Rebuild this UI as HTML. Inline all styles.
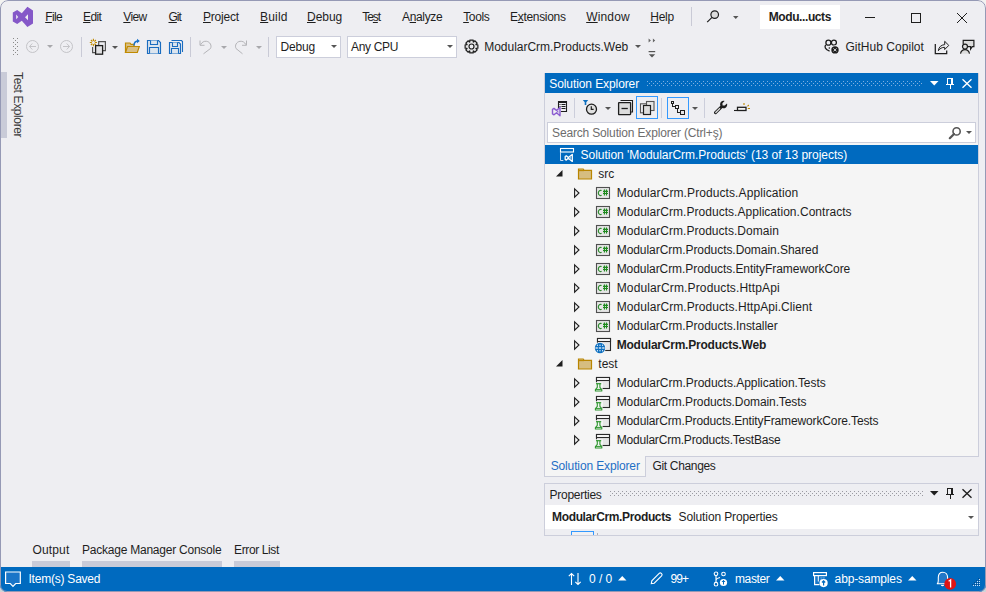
<!DOCTYPE html>
<html><head><meta charset="utf-8">
<style>
html,body{margin:0;padding:0;width:986px;height:592px;overflow:hidden;background:#f3f3f1;}
*{box-sizing:border-box;}
#win{position:absolute;left:0;top:0;width:986px;height:592px;background:#eeeef2;border-radius:8px 8px 7px 7px;overflow:hidden;}
.corner{position:absolute;width:10px;height:10px;background:#d4d4d6;}
#frame{position:absolute;z-index:5;left:0;top:0;width:986px;height:592px;border:1px solid #9599b5;border-radius:8px 8px 7px 7px;pointer-events:none;}
.a{position:absolute;}
.t{position:absolute;z-index:2;font-family:"Liberation Sans",sans-serif;font-size:12px;line-height:14px;white-space:nowrap;color:#1e1e1e;}
.u{text-decoration:underline;text-underline-offset:1px;}
svg{position:absolute;overflow:visible;}
</style></head><body>
<div class="corner" style="left:0;top:582px"></div><div class="corner" style="left:976px;top:582px"></div>
<div id="win">
<!-- ===== title/menu bar ===== -->
<svg style="left:12px;top:6px" width="22" height="22" viewBox="0 0 22 22">
  <path d="M0.8 6.6 L5.2 4 L9.8 7.3 L15.4 0.8 L21 4.5 L21 17.5 L15.4 21 L9.8 14.7 L5.2 18 L0.8 15.4 Z" fill="#8558c8"/>
  <path d="M4.2 8.5 L6.2 10.9 L4.2 13.3 Z" fill="#eeeef2"/>
  <path d="M16 8.2 L16 14.3 L13 11.2 Z" fill="#eeeef2"/>
</svg>
<div class="a" style="left:691px;top:7px;width:1px;height:19px;background:#c9cad6"></div>
<!-- search -->
<svg style="left:705px;top:9px" width="16" height="14" viewBox="0 0 16 14">
  <circle cx="9.7" cy="5.6" r="3.8" fill="#dcdcdc" stroke="#1e1e1e" stroke-width="1.2"/>
  <path d="M7 8.4 L2.2 13.2" stroke="#1e1e1e" stroke-width="1.2"/>
</svg>
<svg style="left:733px;top:16px" width="6" height="4" viewBox="0 0 6 4"><path d="M0 0H5.5L2.75 3Z" fill="#555"/></svg>
<div class="a" style="left:760px;top:5px;width:80px;height:24px;background:#fff"></div>
<!-- window buttons -->
<div class="a" style="left:865px;top:17px;width:10px;height:1px;background:#1e1e1e"></div>
<div class="a" style="left:911px;top:13px;width:10px;height:10px;border:1px solid #1e1e1e"></div>
<svg style="left:957px;top:13px" width="10" height="10" viewBox="0 0 10 10"><path d="M0 0L10 10M10 0L0 10" stroke="#1e1e1e" stroke-width="1"/></svg>

<div class="t" style="left:45.20px;top:10px;letter-spacing:-0.654px"><span class="u">F</span>ile</div>
<div class="t" style="left:83.10px;top:10px;letter-spacing:-0.681px"><span class="u">E</span>dit</div>
<div class="t" style="left:123.30px;top:10px;letter-spacing:-0.609px"><span class="u">V</span>iew</div>
<div class="t" style="left:168.50px;top:10px;letter-spacing:-1.000px"><span class="u">G</span>it</div>
<div class="t" style="left:203.00px;top:10px;letter-spacing:-0.202px"><span class="u">P</span>roject</div>
<div class="t" style="left:260.10px;top:10px;letter-spacing:0.148px"><span class="u">B</span>uild</div>
<div class="t" style="left:307.00px;top:10px;letter-spacing:-0.047px"><span class="u">D</span>ebug</div>
<div class="t" style="left:362.30px;top:10px;letter-spacing:-1.058px">Te<span class="u">s</span>t</div>
<div class="t" style="left:402.00px;top:10px;letter-spacing:-0.336px">A<span class="u">n</span>alyze</div>
<div class="t" style="left:463.20px;top:10px;letter-spacing:-0.353px"><span class="u">T</span>ools</div>
<div class="t" style="left:510.10px;top:10px;letter-spacing:-0.322px">E<span class="u">x</span>tensions</div>
<div class="t" style="left:586.20px;top:10px;letter-spacing:0.157px"><span class="u">W</span>indow</div>
<div class="t" style="left:650.30px;top:10px;letter-spacing:-0.302px"><span class="u">H</span>elp</div>
<div class="t" style="left:768.70px;top:10px;letter-spacing:-0.399px;font-weight:bold">Modu...ucts</div>
<div class="t" style="left:280.50px;top:40px;letter-spacing:-0.147px">Debug</div>
<div class="t" style="left:351.10px;top:40px;letter-spacing:-0.330px">Any CPU</div>
<div class="t" style="left:484.20px;top:40px;letter-spacing:-0.019px">ModularCrm.Products.Web</div>
<div class="t" style="left:845.40px;top:40px;letter-spacing:0.038px">GitHub Copilot</div>
<!-- ===== toolbar ===== -->
<!-- gripper -->
<svg style="left:13px;top:38px" width="6" height="18" viewBox="0 0 6 18" shape-rendering="crispEdges">
 <g fill="#8a8a8a"><rect x="0" y="0" width="1" height="1"/><rect x="4" y="0" width="1" height="1"/><rect x="2" y="2" width="1" height="1"/><rect x="0" y="4" width="1" height="1"/><rect x="4" y="4" width="1" height="1"/><rect x="2" y="6" width="1" height="1"/><rect x="0" y="8" width="1" height="1"/><rect x="4" y="8" width="1" height="1"/><rect x="2" y="10" width="1" height="1"/><rect x="0" y="12" width="1" height="1"/><rect x="4" y="12" width="1" height="1"/><rect x="2" y="14" width="1" height="1"/><rect x="0" y="16" width="1" height="1"/><rect x="4" y="16" width="1" height="1"/></g>
</svg>
<!-- back / forward -->
<svg style="left:26px;top:40px" width="14" height="14" viewBox="0 0 14 14">
 <circle cx="6.5" cy="6.5" r="6" fill="none" stroke="#c4c4c8" stroke-width="1"/>
 <path d="M3.5 6.5H10M6.3 3.5L3.5 6.5L6.3 9.5" fill="none" stroke="#c4c4c8" stroke-width="1"/>
</svg>
<svg style="left:47px;top:45px" width="7" height="4" viewBox="0 0 7 4"><path d="M0 0H6L3 3Z" fill="#a8a8ac"/></svg>
<svg style="left:60px;top:40px" width="14" height="14" viewBox="0 0 14 14">
 <circle cx="6.5" cy="6.5" r="6" fill="none" stroke="#c4c4c8" stroke-width="1"/>
 <path d="M3 6.5H9.5M6.7 3.5L9.5 6.5L6.7 9.5" fill="none" stroke="#c4c4c8" stroke-width="1"/>
</svg>
<div class="a" style="left:81px;top:37px;width:1px;height:20px;background:#c9cad6"></div>
<!-- new project -->
<svg style="left:89px;top:38px" width="18" height="18" viewBox="0 0 18 18">
 <g stroke="#c08a00" stroke-width="1.1"><path d="M4.4 0.8V8.2M0.8 4.5H8M1.9 2L6.9 7M6.9 2L1.9 7"/></g>
 <circle cx="4.4" cy="4.5" r="1.5" fill="#eeeef2"/>
 <path d="M9.7 7.2V3.6H16.4V12.6H14" fill="none" stroke="#555" stroke-width="1.2"/>
 <path d="M3.6 9V14.6H6.2" fill="none" stroke="#555" stroke-width="1.2"/>
 <rect x="6.6" y="7.6" width="7" height="8.6" fill="#e2e2e4" stroke="#1e1e1e" stroke-width="1.3"/>
</svg>
<svg style="left:112px;top:46px" width="7" height="4" viewBox="0 0 7 4"><path d="M0 0H6L3 3Z" fill="#555"/></svg>
<!-- open -->
<svg style="left:124px;top:38px" width="17" height="16" viewBox="0 0 17 16">
 <path d="M1.5 14.5V5H6L7 6.3H10V14.5Z" fill="#d9bf85" stroke="#c08a00" stroke-width="1.2"/>
 <path d="M1.5 14.5L3.5 8.5H15.3L13.3 14.5Z" fill="#d9bf85" stroke="#c08a00" stroke-width="1.2"/>
 <path d="M10 7.5C10 4.5 11.5 3 14.5 3" fill="none" stroke="#1a73c9" stroke-width="1.5"/>
 <path d="M13 0.8L15.8 3L13 5.2Z" fill="#1a73c9"/>
</svg>
<!-- save -->
<svg style="left:146px;top:39px" width="16" height="16" viewBox="0 0 16 16">
 <path d="M1.5 1.5H12.5L14.5 3.5V14.5H1.5Z" fill="#dde5ee" stroke="#1a6cc0" stroke-width="1.15"/>
 <path d="M4.5 1.5V5.5H11.5V1.5" fill="#dde5ee" stroke="#1a6cc0" stroke-width="1.15"/>
 <path d="M3.5 14.5V8.5H12.5V14.5" fill="#dde5ee" stroke="#1a6cc0" stroke-width="1.15"/>
</svg>
<svg style="left:168px;top:39px" width="16" height="16" viewBox="0 0 16 16">
 <path d="M3.5 1.5H13.5L14.5 2.5V13" fill="none" stroke="#1a6cc0" stroke-width="1.1"/>
 <path d="M1.5 3.5H11L12.5 5V14.5H1.5Z" fill="#dde5ee" stroke="#1a6cc0" stroke-width="1.15"/>
 <path d="M4.5 3.5V7.5H9.5V3.5" fill="#dde5ee" stroke="#1a6cc0" stroke-width="1.1"/>
 <path d="M3.5 14.5V9.5H10.5V14.5" fill="#dde5ee" stroke="#1a6cc0" stroke-width="1.1"/>
</svg>
<div class="a" style="left:190px;top:37px;width:1px;height:20px;background:#c9cad6"></div>
<!-- undo redo -->
<svg style="left:199px;top:39px" width="14" height="16" viewBox="0 0 14 16">
 <path d="M1 1.5V6.3H5.5" fill="none" stroke="#b4b4b8" stroke-width="1"/>
 <path d="M1.5 5.8C3 3 5 2 7.5 2.3C11 2.8 13 6.5 11.5 9.5L4.5 14.8" fill="none" stroke="#b4b4b8" stroke-width="1"/>
</svg>
<svg style="left:221px;top:46px" width="7" height="4" viewBox="0 0 7 4"><path d="M0 0H6L3 3Z" fill="#a8a8ac"/></svg>
<svg style="left:234px;top:39px" width="14" height="16" viewBox="0 0 14 16">
 <path d="M12.5 1.5V6.3H8" fill="none" stroke="#b4b4b8" stroke-width="1"/>
 <path d="M12 5.8C10.5 3 8.5 2 6 2.3C2.5 2.8 0.5 6.5 2 9.5L8.5 14.8" fill="none" stroke="#b4b4b8" stroke-width="1"/>
</svg>
<svg style="left:256px;top:46px" width="7" height="4" viewBox="0 0 7 4"><path d="M0 0H6L3 3Z" fill="#a8a8ac"/></svg>
<div class="a" style="left:268px;top:37px;width:1px;height:20px;background:#c9cad6"></div>
<!-- combos -->
<div class="a" style="left:276px;top:36px;width:65px;height:22px;background:#fff;border:1px solid #cccedb"></div>
<svg style="left:331px;top:45px" width="7" height="4" viewBox="0 0 7 4"><path d="M0 0H6L3 3Z" fill="#555"/></svg>
<div class="a" style="left:347px;top:36px;width:110px;height:22px;background:#fff;border:1px solid #cccedb"></div>
<svg style="left:447px;top:45px" width="7" height="4" viewBox="0 0 7 4"><path d="M0 0H6L3 3Z" fill="#555"/></svg>
<!-- gear -->
<svg style="left:464px;top:39px" width="15" height="15" viewBox="0 0 15 15">
 <path d="M5.62 2.97 L5.77 2.91 L5.80 1.12 L9.20 1.12 L9.23 2.91 L9.38 2.97 L9.52 3.04 L10.81 1.79 L13.21 4.19 L11.96 5.48 L12.03 5.62 L12.09 5.77 L13.88 5.80 L13.88 9.20 L12.09 9.23 L12.03 9.38 L11.96 9.52 L13.21 10.81 L10.81 13.21 L9.52 11.96 L9.38 12.03 L9.23 12.09 L9.20 13.88 L5.80 13.88 L5.77 12.09 L5.62 12.03 L5.48 11.96 L4.19 13.21 L1.79 10.81 L3.04 9.52 L2.97 9.38 L2.91 9.23 L1.12 9.20 L1.12 5.80 L2.91 5.77 L2.97 5.62 L3.04 5.48 L1.79 4.19 L4.19 1.79 L5.48 3.04Z" fill="#e4e4e6" stroke="#1e1e1e" stroke-width="1.2" stroke-linejoin="round"/>
 <circle cx="7.5" cy="7.5" r="2.5" fill="#eeeef2" stroke="#1e1e1e" stroke-width="1.2"/>
</svg>
<svg style="left:635px;top:45px" width="7" height="4" viewBox="0 0 7 4"><path d="M0 0H6L3 3Z" fill="#555"/></svg>
<!-- overflow -->
<svg style="left:647px;top:38px" width="10" height="20" viewBox="0 0 10 20">
 <path d="M1.6 0.6L3.9 2.6L1.6 4.6ZM5.9 0.6L8.2 2.6L5.9 4.6Z" fill="#666"/>
 <rect x="1.6" y="13" width="6.6" height="1.2" fill="#555"/>
 <path d="M1.8 16.3H8.2L5 19.6Z" fill="#555"/>
</svg>
<!-- right side -->
<svg style="left:820px;top:36px" width="22" height="20" viewBox="0 0 22 20">
 <circle cx="8.4" cy="6.7" r="2.5" fill="#eeeef2" stroke="#1e1e1e" stroke-width="1.3"/>
 <circle cx="13.9" cy="6.6" r="2.5" fill="#eeeef2" stroke="#1e1e1e" stroke-width="1.3"/>
 <path d="M5.6 8.8C4.6 10.5 4.6 13.6 9.6 15.2" fill="none" stroke="#1e1e1e" stroke-width="1.3"/>
 <path d="M9.3 11.2V12.8" stroke="#1e1e1e" stroke-width="1.1"/>
 <circle cx="15" cy="13.9" r="4.4" fill="#eeeef2"/>
 <circle cx="15" cy="13.9" r="3.7" fill="#1e1e1e"/>
 <path d="M13.5 12.4L16.5 15.4M16.5 12.4L13.5 15.4" stroke="#eeeef2" stroke-width="0.9"/>
</svg>
<div class="t" style="left:845px;top:40px;display:none"></div>
<svg style="left:934px;top:40px" width="16" height="15" viewBox="0 0 16 15">
 <path d="M1.3 4.1V13.5H12.7V10.5" fill="none" stroke="#1e1e1e" stroke-width="1.25"/>
 <path d="M4.4 10.7C4.8 7 7 5 10.7 4.6V1.3L14.8 5.4L10.7 9.5V7.3C8 7.3 5.8 8.5 4.4 10.7Z" fill="#eeeef2" stroke="#1e1e1e" stroke-width="1" stroke-linejoin="round"/>
</svg>
<svg style="left:960px;top:39px" width="16" height="16" viewBox="0 0 16 16">
 <path d="M3.2 5V1.3H13.9V7.6H12.3L10.6 10V7.6H8" fill="#dcdcdc" stroke="#1e1e1e" stroke-width="1.2"/>
 <path d="M0.5 14.7C1 12 2.8 10.6 5 10.6C7.2 10.6 9 12 9.5 14.7Z" fill="#dcdcdc"/>
 <path d="M0.5 14.7C1 12 2.8 10.6 5 10.6C7.2 10.6 9 12 9.5 14.7" fill="none" stroke="#1e1e1e" stroke-width="1.2"/>
 <circle cx="5" cy="7.6" r="2.5" fill="#dcdcdc" stroke="#1e1e1e" stroke-width="1.2"/>
</svg>
<!-- ===== Solution Explorer ===== -->
<div class="a" style="left:544px;top:73px;width:435px;height:384px;border:1px solid #cccedb;border-top:none;background:#eeeef2"></div>
<div class="a" style="left:545px;top:73px;width:433px;height:20px;background:#006abf"></div>
<div class="t" style="left:549.30px;top:77px;letter-spacing:-0.093px;color:#fff">Solution Explorer</div>
<svg style="left:647px;top:81px" width="276" height="5" shape-rendering="crispEdges"><g fill="#7fb0e0"><rect x="0" y="0" width="1" height="1"/><rect x="0" y="4" width="1" height="1"/><rect x="2" y="2" width="1" height="1"/><rect x="4" y="0" width="1" height="1"/><rect x="4" y="4" width="1" height="1"/><rect x="6" y="2" width="1" height="1"/><rect x="8" y="0" width="1" height="1"/><rect x="8" y="4" width="1" height="1"/><rect x="10" y="2" width="1" height="1"/><rect x="12" y="0" width="1" height="1"/><rect x="12" y="4" width="1" height="1"/><rect x="14" y="2" width="1" height="1"/><rect x="16" y="0" width="1" height="1"/><rect x="16" y="4" width="1" height="1"/><rect x="18" y="2" width="1" height="1"/><rect x="20" y="0" width="1" height="1"/><rect x="20" y="4" width="1" height="1"/><rect x="22" y="2" width="1" height="1"/><rect x="24" y="0" width="1" height="1"/><rect x="24" y="4" width="1" height="1"/><rect x="26" y="2" width="1" height="1"/><rect x="28" y="0" width="1" height="1"/><rect x="28" y="4" width="1" height="1"/><rect x="30" y="2" width="1" height="1"/><rect x="32" y="0" width="1" height="1"/><rect x="32" y="4" width="1" height="1"/><rect x="34" y="2" width="1" height="1"/><rect x="36" y="0" width="1" height="1"/><rect x="36" y="4" width="1" height="1"/><rect x="38" y="2" width="1" height="1"/><rect x="40" y="0" width="1" height="1"/><rect x="40" y="4" width="1" height="1"/><rect x="42" y="2" width="1" height="1"/><rect x="44" y="0" width="1" height="1"/><rect x="44" y="4" width="1" height="1"/><rect x="46" y="2" width="1" height="1"/><rect x="48" y="0" width="1" height="1"/><rect x="48" y="4" width="1" height="1"/><rect x="50" y="2" width="1" height="1"/><rect x="52" y="0" width="1" height="1"/><rect x="52" y="4" width="1" height="1"/><rect x="54" y="2" width="1" height="1"/><rect x="56" y="0" width="1" height="1"/><rect x="56" y="4" width="1" height="1"/><rect x="58" y="2" width="1" height="1"/><rect x="60" y="0" width="1" height="1"/><rect x="60" y="4" width="1" height="1"/><rect x="62" y="2" width="1" height="1"/><rect x="64" y="0" width="1" height="1"/><rect x="64" y="4" width="1" height="1"/><rect x="66" y="2" width="1" height="1"/><rect x="68" y="0" width="1" height="1"/><rect x="68" y="4" width="1" height="1"/><rect x="70" y="2" width="1" height="1"/><rect x="72" y="0" width="1" height="1"/><rect x="72" y="4" width="1" height="1"/><rect x="74" y="2" width="1" height="1"/><rect x="76" y="0" width="1" height="1"/><rect x="76" y="4" width="1" height="1"/><rect x="78" y="2" width="1" height="1"/><rect x="80" y="0" width="1" height="1"/><rect x="80" y="4" width="1" height="1"/><rect x="82" y="2" width="1" height="1"/><rect x="84" y="0" width="1" height="1"/><rect x="84" y="4" width="1" height="1"/><rect x="86" y="2" width="1" height="1"/><rect x="88" y="0" width="1" height="1"/><rect x="88" y="4" width="1" height="1"/><rect x="90" y="2" width="1" height="1"/><rect x="92" y="0" width="1" height="1"/><rect x="92" y="4" width="1" height="1"/><rect x="94" y="2" width="1" height="1"/><rect x="96" y="0" width="1" height="1"/><rect x="96" y="4" width="1" height="1"/><rect x="98" y="2" width="1" height="1"/><rect x="100" y="0" width="1" height="1"/><rect x="100" y="4" width="1" height="1"/><rect x="102" y="2" width="1" height="1"/><rect x="104" y="0" width="1" height="1"/><rect x="104" y="4" width="1" height="1"/><rect x="106" y="2" width="1" height="1"/><rect x="108" y="0" width="1" height="1"/><rect x="108" y="4" width="1" height="1"/><rect x="110" y="2" width="1" height="1"/><rect x="112" y="0" width="1" height="1"/><rect x="112" y="4" width="1" height="1"/><rect x="114" y="2" width="1" height="1"/><rect x="116" y="0" width="1" height="1"/><rect x="116" y="4" width="1" height="1"/><rect x="118" y="2" width="1" height="1"/><rect x="120" y="0" width="1" height="1"/><rect x="120" y="4" width="1" height="1"/><rect x="122" y="2" width="1" height="1"/><rect x="124" y="0" width="1" height="1"/><rect x="124" y="4" width="1" height="1"/><rect x="126" y="2" width="1" height="1"/><rect x="128" y="0" width="1" height="1"/><rect x="128" y="4" width="1" height="1"/><rect x="130" y="2" width="1" height="1"/><rect x="132" y="0" width="1" height="1"/><rect x="132" y="4" width="1" height="1"/><rect x="134" y="2" width="1" height="1"/><rect x="136" y="0" width="1" height="1"/><rect x="136" y="4" width="1" height="1"/><rect x="138" y="2" width="1" height="1"/><rect x="140" y="0" width="1" height="1"/><rect x="140" y="4" width="1" height="1"/><rect x="142" y="2" width="1" height="1"/><rect x="144" y="0" width="1" height="1"/><rect x="144" y="4" width="1" height="1"/><rect x="146" y="2" width="1" height="1"/><rect x="148" y="0" width="1" height="1"/><rect x="148" y="4" width="1" height="1"/><rect x="150" y="2" width="1" height="1"/><rect x="152" y="0" width="1" height="1"/><rect x="152" y="4" width="1" height="1"/><rect x="154" y="2" width="1" height="1"/><rect x="156" y="0" width="1" height="1"/><rect x="156" y="4" width="1" height="1"/><rect x="158" y="2" width="1" height="1"/><rect x="160" y="0" width="1" height="1"/><rect x="160" y="4" width="1" height="1"/><rect x="162" y="2" width="1" height="1"/><rect x="164" y="0" width="1" height="1"/><rect x="164" y="4" width="1" height="1"/><rect x="166" y="2" width="1" height="1"/><rect x="168" y="0" width="1" height="1"/><rect x="168" y="4" width="1" height="1"/><rect x="170" y="2" width="1" height="1"/><rect x="172" y="0" width="1" height="1"/><rect x="172" y="4" width="1" height="1"/><rect x="174" y="2" width="1" height="1"/><rect x="176" y="0" width="1" height="1"/><rect x="176" y="4" width="1" height="1"/><rect x="178" y="2" width="1" height="1"/><rect x="180" y="0" width="1" height="1"/><rect x="180" y="4" width="1" height="1"/><rect x="182" y="2" width="1" height="1"/><rect x="184" y="0" width="1" height="1"/><rect x="184" y="4" width="1" height="1"/><rect x="186" y="2" width="1" height="1"/><rect x="188" y="0" width="1" height="1"/><rect x="188" y="4" width="1" height="1"/><rect x="190" y="2" width="1" height="1"/><rect x="192" y="0" width="1" height="1"/><rect x="192" y="4" width="1" height="1"/><rect x="194" y="2" width="1" height="1"/><rect x="196" y="0" width="1" height="1"/><rect x="196" y="4" width="1" height="1"/><rect x="198" y="2" width="1" height="1"/><rect x="200" y="0" width="1" height="1"/><rect x="200" y="4" width="1" height="1"/><rect x="202" y="2" width="1" height="1"/><rect x="204" y="0" width="1" height="1"/><rect x="204" y="4" width="1" height="1"/><rect x="206" y="2" width="1" height="1"/><rect x="208" y="0" width="1" height="1"/><rect x="208" y="4" width="1" height="1"/><rect x="210" y="2" width="1" height="1"/><rect x="212" y="0" width="1" height="1"/><rect x="212" y="4" width="1" height="1"/><rect x="214" y="2" width="1" height="1"/><rect x="216" y="0" width="1" height="1"/><rect x="216" y="4" width="1" height="1"/><rect x="218" y="2" width="1" height="1"/><rect x="220" y="0" width="1" height="1"/><rect x="220" y="4" width="1" height="1"/><rect x="222" y="2" width="1" height="1"/><rect x="224" y="0" width="1" height="1"/><rect x="224" y="4" width="1" height="1"/><rect x="226" y="2" width="1" height="1"/><rect x="228" y="0" width="1" height="1"/><rect x="228" y="4" width="1" height="1"/><rect x="230" y="2" width="1" height="1"/><rect x="232" y="0" width="1" height="1"/><rect x="232" y="4" width="1" height="1"/><rect x="234" y="2" width="1" height="1"/><rect x="236" y="0" width="1" height="1"/><rect x="236" y="4" width="1" height="1"/><rect x="238" y="2" width="1" height="1"/><rect x="240" y="0" width="1" height="1"/><rect x="240" y="4" width="1" height="1"/><rect x="242" y="2" width="1" height="1"/><rect x="244" y="0" width="1" height="1"/><rect x="244" y="4" width="1" height="1"/><rect x="246" y="2" width="1" height="1"/><rect x="248" y="0" width="1" height="1"/><rect x="248" y="4" width="1" height="1"/><rect x="250" y="2" width="1" height="1"/><rect x="252" y="0" width="1" height="1"/><rect x="252" y="4" width="1" height="1"/><rect x="254" y="2" width="1" height="1"/><rect x="256" y="0" width="1" height="1"/><rect x="256" y="4" width="1" height="1"/><rect x="258" y="2" width="1" height="1"/><rect x="260" y="0" width="1" height="1"/><rect x="260" y="4" width="1" height="1"/><rect x="262" y="2" width="1" height="1"/><rect x="264" y="0" width="1" height="1"/><rect x="264" y="4" width="1" height="1"/><rect x="266" y="2" width="1" height="1"/><rect x="268" y="0" width="1" height="1"/><rect x="268" y="4" width="1" height="1"/><rect x="270" y="2" width="1" height="1"/><rect x="272" y="0" width="1" height="1"/><rect x="272" y="4" width="1" height="1"/><rect x="274" y="2" width="1" height="1"/></g></svg>
<svg style="left:930px;top:81px" width="9" height="5" viewBox="0 0 9 5"><path d="M0 0H8.5L4.25 4.5Z" fill="#fff"/></svg>
<svg style="left:946px;top:78px" width="9" height="12" viewBox="0 0 9 12" shape-rendering="crispEdges"><path d="M1 0H7V6H8V7H0V6H1Z" fill="#fff"/><path d="M2 1H5V6H2Z" fill="#006abf"/><rect x="4" y="7" width="1" height="4" fill="#fff"/></svg>
<svg style="left:962px;top:79px" width="10" height="9" viewBox="0 0 10 9"><path d="M0.5 0.3L9.5 8.7M9.5 0.3L0.5 8.7" stroke="#fff" stroke-width="1.4"/></svg>
<svg style="left:551px;top:100px" width="18" height="17" viewBox="0 0 18 17">
 <path d="M7.5 9V1.5H15.5V11.5H10" fill="#eeeef2" stroke="#1e1e1e" stroke-width="1.1"/>
 <rect x="7" y="1" width="9" height="2" fill="#1e1e1e"/>
 <path d="M8.5 4.5H9.5M8.5 6.5H9.5M10.5 4.5H14.5M10.5 6.5H14.5M10.5 8.5H14.5" stroke="#1e1e1e" stroke-width="1"/>
 <g transform="translate(0,1)"><path d="M1.5 8.3L3 7.4L5.5 9.5L9 6.5V14.8L5.5 11.7L3 13.8L1.5 12.9Z" fill="#eeeef2" stroke="#8a5bd0" stroke-width="1.4" stroke-linejoin="round"/>
 <path d="M7.3 9.3V12L5.8 10.6Z" fill="#8a5bd0"/></g>
</svg>
<div class="a" style="left:574px;top:98px;width:1px;height:20px;background:#cccedb"></div>
<svg style="left:582px;top:99px" width="17" height="17" viewBox="0 0 17 17">
 <path d="M0.8 1H6.2L4.3 3.3V6H2.7V3.3Z" fill="#0e70c0"/>
 <circle cx="9.5" cy="10.2" r="5" fill="#e0e0e0" stroke="#1e1e1e" stroke-width="1.3"/>
 <path d="M9.3 7.2V10.3H11.6" fill="none" stroke="#1e1e1e" stroke-width="1.2"/>
</svg>
<svg style="left:605px;top:107px" width="7" height="4" viewBox="0 0 7 4"><path d="M0 0H6L3 3Z" fill="#555"/></svg>
<svg style="left:617px;top:99px" width="17" height="17" viewBox="0 0 17 17">
 <path d="M3.5 1.5H15.5V13H14" fill="none" stroke="#1e1e1e" stroke-width="1.1"/>
 <rect x="1.6" y="3.6" width="12" height="12" rx="0.5" fill="#dcdcdc" stroke="#1e1e1e" stroke-width="1.3"/>
 <path d="M4.5 9.5H10.8" stroke="#1e1e1e" stroke-width="1.3"/>
</svg>
<div class="a" style="left:636px;top:96px;width:22px;height:23px;border:1px solid #3399ff"></div>
<svg style="left:639px;top:100px" width="17" height="16" viewBox="0 0 17 16">
 <rect x="7.5" y="1.5" width="7.5" height="9" fill="#e6e6e6" stroke="#555" stroke-width="1.1"/>
 <rect x="1.5" y="3.8" width="6" height="9" fill="#eeeef2" stroke="#555" stroke-width="1.1"/>
 <rect x="4.5" y="5.5" width="7" height="9" fill="#dcdcdc" stroke="#1e1e1e" stroke-width="1.2"/>
</svg>
<div class="a" style="left:661px;top:98px;width:1px;height:20px;background:#cccedb"></div>
<div class="a" style="left:667px;top:97px;width:22px;height:22px;border:1px solid #3399ff"></div>
<svg style="left:670px;top:100px" width="16" height="16" viewBox="0 0 16 16" shape-rendering="crispEdges">
 <rect x="1.5" y="1.5" width="2" height="2" fill="none" stroke="#1e1e1e" stroke-width="1"/>
 <rect x="5.5" y="5.5" width="3" height="3" fill="none" stroke="#1e1e1e" stroke-width="1"/>
 <rect x="10.5" y="10.5" width="4" height="4" fill="#e6e6e6" stroke="#1e1e1e" stroke-width="1"/>
 <path d="M2.5 3.5V6.5H5.5M7 8.5V12.5H10.5" fill="none" stroke="#1e1e1e" stroke-width="1"/>
</svg>
<svg style="left:692px;top:107px" width="7" height="4" viewBox="0 0 7 4"><path d="M0 0H6L3 3Z" fill="#555"/></svg>
<div class="a" style="left:704px;top:98px;width:1px;height:20px;background:#cccedb"></div>
<svg style="left:713px;top:100px" width="15" height="15" viewBox="0 0 15 15">
 <path d="M14 3.4L11.7 5.6L9.6 5.4L9.4 3.3L11.6 1C9.6 0.3 7.1 1.6 7.1 4.2C7.1 4.8 7.2 5.3 7.4 5.7L1.5 11.6C0.7 12.4 0.9 13.3 1.4 13.8C1.9 14.3 2.8 14.5 3.6 13.7L9.4 7.9C9.8 8.1 10.3 8.2 10.9 8.2C13.5 8.1 14.7 5.4 14 3.4Z" fill="#1e1e1e"/>
 <path d="M6.6 7.8L2.3 12.1C2 12.4 2.1 12.8 2.4 13C2.6 13.2 3 13.2 3.2 12.9L7.4 8.7Z" fill="#dcdcdc"/>
</svg>
<svg style="left:734px;top:100px" width="17" height="12" viewBox="0 0 17 12">
 <path d="M0 10.5H3" stroke="#1e1e1e" stroke-width="1.1"/>
 <rect x="3.5" y="7.3" width="8.5" height="3.2" fill="#f5f5f5" stroke="#1e1e1e" stroke-width="1.3"/>
 <path d="M10 3V5M13.5 6.3L14.8 5M13.8 8.5H16" stroke="#c08a00" stroke-width="1.1"/>
</svg>
<div class="a" style="left:547px;top:122px;width:429px;height:21px;background:#fff;border:1px solid #cccedb"></div>
<div class="t" style="left:552.10px;top:126px;letter-spacing:-0.167px;color:#6d6d6d">Search Solution Explorer (Ctrl+ş)</div>
<svg style="left:948px;top:126px" width="14" height="14" viewBox="0 0 14 14">
 <circle cx="8.6" cy="5.4" r="3.6" fill="none" stroke="#555" stroke-width="1.6"/>
 <path d="M6 8L1.8 12.2" stroke="#555" stroke-width="2.2" stroke-linecap="round"/>
</svg>
<svg style="left:966px;top:131px" width="7" height="4" viewBox="0 0 7 4"><path d="M0 0H6L3 3Z" fill="#555"/></svg>
<div class="a" style="left:545px;top:143px;width:433px;height:313px;background:#f5f5f5"></div>
<div class="a" style="left:545px;top:145px;width:433px;height:19px;background:#006abf"></div>
<svg style="left:559px;top:147px" width="16" height="15" viewBox="0 0 16 15"><rect x="1.5" y="1.5" width="13" height="3.5" fill="none" stroke="#fff" stroke-width="1.1"/><path d="M1.5 5V13.5H4.3" fill="none" stroke="#c8ddf2" stroke-width="1"/><path d="M6.2 9.5L7.3 8.8L9.3 10.6L13.3 7.5V14.4L9.3 11.3L7.3 13.1L6.2 12.4Z" fill="#006abf" stroke="#fff" stroke-width="1.3" stroke-linejoin="round"/><path d="M11.6 9.8V12.1L10.3 11Z" fill="#fff"/></svg>
<div class="t" style="left:580.60px;top:148px;letter-spacing:-0.029px;color:#fff">Solution &#39;ModularCrm.Products&#39; (13 of 13 projects)</div>
<svg style="left:556px;top:170px" width="7" height="7" viewBox="0 0 7 7"><path d="M0 6.5L6.5 0V6.5Z" fill="#1e1e1e"/></svg>
<svg style="left:577px;top:168px" width="16" height="12" viewBox="0 0 16 12"><path d="M1.5 11V1H6.2L7.2 2.3H14.5V11Z" fill="#d6bd80" stroke="#b98500" stroke-width="1.2"/><path d="M1.5 2.6H7.2" stroke="#b98500" stroke-width="1.1"/></svg>
<div class="t" style="left:598.30px;top:167px">src</div>
<svg style="left:574px;top:188px" width="6" height="10" viewBox="0 0 6 10"><path d="M0.6 0.8L5 5L0.6 9.2Z" fill="none" stroke="#1e1e1e" stroke-width="1.1"/></svg>
<svg style="left:596px;top:187px" width="14" height="12" viewBox="0 0 14 12"><rect x="0.5" y="0.5" width="13" height="11" fill="#e6e6e6" stroke="#505050" stroke-width="1.1"/><path d="M5.6 3.6A2.3 2.6 0 1 0 5.6 8.3" fill="none" stroke="#2e8b2e" stroke-width="1.15"/><path d="M8.4 2.6V8.4M10.5 2.6V8.4M7 4.4H12M7 6.5H12" stroke="#1e8a1e" stroke-width="1.15"/></svg>
<div class="t" style="left:616.70px;top:186px;letter-spacing:0.091px">ModularCrm.Products.Application</div>
<svg style="left:574px;top:207px" width="6" height="10" viewBox="0 0 6 10"><path d="M0.6 0.8L5 5L0.6 9.2Z" fill="none" stroke="#1e1e1e" stroke-width="1.1"/></svg>
<svg style="left:596px;top:206px" width="14" height="12" viewBox="0 0 14 12"><rect x="0.5" y="0.5" width="13" height="11" fill="#e6e6e6" stroke="#505050" stroke-width="1.1"/><path d="M5.6 3.6A2.3 2.6 0 1 0 5.6 8.3" fill="none" stroke="#2e8b2e" stroke-width="1.15"/><path d="M8.4 2.6V8.4M10.5 2.6V8.4M7 4.4H12M7 6.5H12" stroke="#1e8a1e" stroke-width="1.15"/></svg>
<div class="t" style="left:616.70px;top:205px;letter-spacing:0.037px">ModularCrm.Products.Application.Contracts</div>
<svg style="left:574px;top:226px" width="6" height="10" viewBox="0 0 6 10"><path d="M0.6 0.8L5 5L0.6 9.2Z" fill="none" stroke="#1e1e1e" stroke-width="1.1"/></svg>
<svg style="left:596px;top:225px" width="14" height="12" viewBox="0 0 14 12"><rect x="0.5" y="0.5" width="13" height="11" fill="#e6e6e6" stroke="#505050" stroke-width="1.1"/><path d="M5.6 3.6A2.3 2.6 0 1 0 5.6 8.3" fill="none" stroke="#2e8b2e" stroke-width="1.15"/><path d="M8.4 2.6V8.4M10.5 2.6V8.4M7 4.4H12M7 6.5H12" stroke="#1e8a1e" stroke-width="1.15"/></svg>
<div class="t" style="left:616.70px;top:224px;letter-spacing:0.032px">ModularCrm.Products.Domain</div>
<svg style="left:574px;top:245px" width="6" height="10" viewBox="0 0 6 10"><path d="M0.6 0.8L5 5L0.6 9.2Z" fill="none" stroke="#1e1e1e" stroke-width="1.1"/></svg>
<svg style="left:596px;top:244px" width="14" height="12" viewBox="0 0 14 12"><rect x="0.5" y="0.5" width="13" height="11" fill="#e6e6e6" stroke="#505050" stroke-width="1.1"/><path d="M5.6 3.6A2.3 2.6 0 1 0 5.6 8.3" fill="none" stroke="#2e8b2e" stroke-width="1.15"/><path d="M8.4 2.6V8.4M10.5 2.6V8.4M7 4.4H12M7 6.5H12" stroke="#1e8a1e" stroke-width="1.15"/></svg>
<div class="t" style="left:616.70px;top:243px;letter-spacing:-0.054px">ModularCrm.Products.Domain.Shared</div>
<svg style="left:574px;top:264px" width="6" height="10" viewBox="0 0 6 10"><path d="M0.6 0.8L5 5L0.6 9.2Z" fill="none" stroke="#1e1e1e" stroke-width="1.1"/></svg>
<svg style="left:596px;top:263px" width="14" height="12" viewBox="0 0 14 12"><rect x="0.5" y="0.5" width="13" height="11" fill="#e6e6e6" stroke="#505050" stroke-width="1.1"/><path d="M5.6 3.6A2.3 2.6 0 1 0 5.6 8.3" fill="none" stroke="#2e8b2e" stroke-width="1.15"/><path d="M8.4 2.6V8.4M10.5 2.6V8.4M7 4.4H12M7 6.5H12" stroke="#1e8a1e" stroke-width="1.15"/></svg>
<div class="t" style="left:616.70px;top:262px;letter-spacing:-0.065px">ModularCrm.Products.EntityFrameworkCore</div>
<svg style="left:574px;top:283px" width="6" height="10" viewBox="0 0 6 10"><path d="M0.6 0.8L5 5L0.6 9.2Z" fill="none" stroke="#1e1e1e" stroke-width="1.1"/></svg>
<svg style="left:596px;top:282px" width="14" height="12" viewBox="0 0 14 12"><rect x="0.5" y="0.5" width="13" height="11" fill="#e6e6e6" stroke="#505050" stroke-width="1.1"/><path d="M5.6 3.6A2.3 2.6 0 1 0 5.6 8.3" fill="none" stroke="#2e8b2e" stroke-width="1.15"/><path d="M8.4 2.6V8.4M10.5 2.6V8.4M7 4.4H12M7 6.5H12" stroke="#1e8a1e" stroke-width="1.15"/></svg>
<div class="t" style="left:616.70px;top:281px;letter-spacing:0.138px">ModularCrm.Products.HttpApi</div>
<svg style="left:574px;top:302px" width="6" height="10" viewBox="0 0 6 10"><path d="M0.6 0.8L5 5L0.6 9.2Z" fill="none" stroke="#1e1e1e" stroke-width="1.1"/></svg>
<svg style="left:596px;top:301px" width="14" height="12" viewBox="0 0 14 12"><rect x="0.5" y="0.5" width="13" height="11" fill="#e6e6e6" stroke="#505050" stroke-width="1.1"/><path d="M5.6 3.6A2.3 2.6 0 1 0 5.6 8.3" fill="none" stroke="#2e8b2e" stroke-width="1.15"/><path d="M8.4 2.6V8.4M10.5 2.6V8.4M7 4.4H12M7 6.5H12" stroke="#1e8a1e" stroke-width="1.15"/></svg>
<div class="t" style="left:616.70px;top:300px;letter-spacing:0.059px">ModularCrm.Products.HttpApi.Client</div>
<svg style="left:574px;top:321px" width="6" height="10" viewBox="0 0 6 10"><path d="M0.6 0.8L5 5L0.6 9.2Z" fill="none" stroke="#1e1e1e" stroke-width="1.1"/></svg>
<svg style="left:596px;top:320px" width="14" height="12" viewBox="0 0 14 12"><rect x="0.5" y="0.5" width="13" height="11" fill="#e6e6e6" stroke="#505050" stroke-width="1.1"/><path d="M5.6 3.6A2.3 2.6 0 1 0 5.6 8.3" fill="none" stroke="#2e8b2e" stroke-width="1.15"/><path d="M8.4 2.6V8.4M10.5 2.6V8.4M7 4.4H12M7 6.5H12" stroke="#1e8a1e" stroke-width="1.15"/></svg>
<div class="t" style="left:616.70px;top:319px;letter-spacing:-0.038px">ModularCrm.Products.Installer</div>
<svg style="left:574px;top:340px" width="6" height="10" viewBox="0 0 6 10"><path d="M0.6 0.8L5 5L0.6 9.2Z" fill="none" stroke="#1e1e1e" stroke-width="1.1"/></svg>
<svg style="left:594px;top:338px" width="18" height="17" viewBox="0 0 18 17"><rect x="3.5" y="0.5" width="13" height="12" fill="#e6e6e6" stroke="#2a2a2a" stroke-width="1.1"/><rect x="3.5" y="0.5" width="13" height="3" fill="#fff" stroke="#2a2a2a" stroke-width="1.1"/><circle cx="6" cy="10" r="5.9" fill="#f5f5f5"/><circle cx="6" cy="10" r="5.2" fill="#0e70c0"/><g fill="#fff"><rect x="2.9" y="6.7" width="1.1" height="1.1"/><rect x="5.4" y="6.7" width="1.2" height="1.1"/><rect x="8" y="6.7" width="1.1" height="1.1"/><rect x="1.5" y="9.4" width="2.3" height="1.2"/><rect x="4.8" y="9.4" width="2.4" height="1.2"/><rect x="8.2" y="9.4" width="2.3" height="1.2"/><rect x="2.9" y="12.2" width="1.1" height="1.1"/><rect x="5.4" y="12.2" width="1.2" height="1.1"/><rect x="8" y="12.2" width="1.1" height="1.1"/></g></svg>
<div class="t" style="left:616.70px;top:338px;letter-spacing:-0.224px;font-weight:bold">ModularCrm.Products.Web</div>
<svg style="left:556px;top:360px" width="7" height="7" viewBox="0 0 7 7"><path d="M0 6.5L6.5 0V6.5Z" fill="#1e1e1e"/></svg>
<svg style="left:577px;top:358px" width="16" height="12" viewBox="0 0 16 12"><path d="M1.5 11V1H6.2L7.2 2.3H14.5V11Z" fill="#d6bd80" stroke="#b98500" stroke-width="1.2"/><path d="M1.5 2.6H7.2" stroke="#b98500" stroke-width="1.1"/></svg>
<div class="t" style="left:598.30px;top:357px">test</div>
<svg style="left:574px;top:378px" width="6" height="10" viewBox="0 0 6 10"><path d="M0.6 0.8L5 5L0.6 9.2Z" fill="none" stroke="#1e1e1e" stroke-width="1.1"/></svg>
<svg style="left:594px;top:377px" width="18" height="16" viewBox="0 0 18 16"><rect x="2.5" y="0.5" width="13" height="11" fill="#e6e6e6" stroke="#2a2a2a" stroke-width="1.1"/><rect x="2.5" y="0.5" width="13" height="3" fill="#fff" stroke="#2a2a2a" stroke-width="1.1"/><path d="M0 5.2H9V10H8.6V15H0Z" fill="#f5f5f5"/><path d="M2 6.7H7.2" stroke="#2e962e" stroke-width="1.2"/><path d="M3.3 6.7V10.4L1.4 12.6V14H7.8V12.6L5.9 10.4V6.7" fill="none" stroke="#2e962e" stroke-width="1.1" stroke-linejoin="round"/><path d="M2 12.4H7.2" stroke="#2e962e" stroke-width="1"/></svg>
<div class="t" style="left:616.70px;top:376px;letter-spacing:-0.027px">ModularCrm.Products.Application.Tests</div>
<svg style="left:574px;top:397px" width="6" height="10" viewBox="0 0 6 10"><path d="M0.6 0.8L5 5L0.6 9.2Z" fill="none" stroke="#1e1e1e" stroke-width="1.1"/></svg>
<svg style="left:594px;top:396px" width="18" height="16" viewBox="0 0 18 16"><rect x="2.5" y="0.5" width="13" height="11" fill="#e6e6e6" stroke="#2a2a2a" stroke-width="1.1"/><rect x="2.5" y="0.5" width="13" height="3" fill="#fff" stroke="#2a2a2a" stroke-width="1.1"/><path d="M0 5.2H9V10H8.6V15H0Z" fill="#f5f5f5"/><path d="M2 6.7H7.2" stroke="#2e962e" stroke-width="1.2"/><path d="M3.3 6.7V10.4L1.4 12.6V14H7.8V12.6L5.9 10.4V6.7" fill="none" stroke="#2e962e" stroke-width="1.1" stroke-linejoin="round"/><path d="M2 12.4H7.2" stroke="#2e962e" stroke-width="1"/></svg>
<div class="t" style="left:616.70px;top:395px;letter-spacing:-0.094px">ModularCrm.Products.Domain.Tests</div>
<svg style="left:574px;top:416px" width="6" height="10" viewBox="0 0 6 10"><path d="M0.6 0.8L5 5L0.6 9.2Z" fill="none" stroke="#1e1e1e" stroke-width="1.1"/></svg>
<svg style="left:594px;top:415px" width="18" height="16" viewBox="0 0 18 16"><rect x="2.5" y="0.5" width="13" height="11" fill="#e6e6e6" stroke="#2a2a2a" stroke-width="1.1"/><rect x="2.5" y="0.5" width="13" height="3" fill="#fff" stroke="#2a2a2a" stroke-width="1.1"/><path d="M0 5.2H9V10H8.6V15H0Z" fill="#f5f5f5"/><path d="M2 6.7H7.2" stroke="#2e962e" stroke-width="1.2"/><path d="M3.3 6.7V10.4L1.4 12.6V14H7.8V12.6L5.9 10.4V6.7" fill="none" stroke="#2e962e" stroke-width="1.1" stroke-linejoin="round"/><path d="M2 12.4H7.2" stroke="#2e962e" stroke-width="1"/></svg>
<div class="t" style="left:616.70px;top:414px;letter-spacing:-0.127px">ModularCrm.Products.EntityFrameworkCore.Tests</div>
<svg style="left:574px;top:435px" width="6" height="10" viewBox="0 0 6 10"><path d="M0.6 0.8L5 5L0.6 9.2Z" fill="none" stroke="#1e1e1e" stroke-width="1.1"/></svg>
<svg style="left:594px;top:434px" width="18" height="16" viewBox="0 0 18 16"><rect x="2.5" y="0.5" width="13" height="11" fill="#e6e6e6" stroke="#2a2a2a" stroke-width="1.1"/><rect x="2.5" y="0.5" width="13" height="3" fill="#fff" stroke="#2a2a2a" stroke-width="1.1"/><path d="M0 5.2H9V10H8.6V15H0Z" fill="#f5f5f5"/><path d="M2 6.7H7.2" stroke="#2e962e" stroke-width="1.2"/><path d="M3.3 6.7V10.4L1.4 12.6V14H7.8V12.6L5.9 10.4V6.7" fill="none" stroke="#2e962e" stroke-width="1.1" stroke-linejoin="round"/><path d="M2 12.4H7.2" stroke="#2e962e" stroke-width="1"/></svg>
<div class="t" style="left:616.70px;top:433px;letter-spacing:-0.197px">ModularCrm.Products.TestBase</div>
<div class="a" style="left:544px;top:456px;width:102px;height:21px;background:#f5f5f5;border:1px solid #cccedb;border-top:none"></div>
<div class="t" style="left:550.70px;top:459px;letter-spacing:-0.137px;color:#1f6fc5">Solution Explorer</div>
<div class="t" style="left:652.50px;top:459px;letter-spacing:-0.340px">Git Changes</div>
<div class="a" style="left:544px;top:483px;width:435px;height:53px;border:1px solid #cccedb;background:#eeeef2"></div>
<div class="t" style="left:549.50px;top:488px;letter-spacing:-0.266px">Properties</div>
<svg style="left:610px;top:491px" width="313" height="5" shape-rendering="crispEdges"><g fill="#9a9aa2"><rect x="0" y="0" width="1" height="1"/><rect x="0" y="4" width="1" height="1"/><rect x="2" y="2" width="1" height="1"/><rect x="4" y="0" width="1" height="1"/><rect x="4" y="4" width="1" height="1"/><rect x="6" y="2" width="1" height="1"/><rect x="8" y="0" width="1" height="1"/><rect x="8" y="4" width="1" height="1"/><rect x="10" y="2" width="1" height="1"/><rect x="12" y="0" width="1" height="1"/><rect x="12" y="4" width="1" height="1"/><rect x="14" y="2" width="1" height="1"/><rect x="16" y="0" width="1" height="1"/><rect x="16" y="4" width="1" height="1"/><rect x="18" y="2" width="1" height="1"/><rect x="20" y="0" width="1" height="1"/><rect x="20" y="4" width="1" height="1"/><rect x="22" y="2" width="1" height="1"/><rect x="24" y="0" width="1" height="1"/><rect x="24" y="4" width="1" height="1"/><rect x="26" y="2" width="1" height="1"/><rect x="28" y="0" width="1" height="1"/><rect x="28" y="4" width="1" height="1"/><rect x="30" y="2" width="1" height="1"/><rect x="32" y="0" width="1" height="1"/><rect x="32" y="4" width="1" height="1"/><rect x="34" y="2" width="1" height="1"/><rect x="36" y="0" width="1" height="1"/><rect x="36" y="4" width="1" height="1"/><rect x="38" y="2" width="1" height="1"/><rect x="40" y="0" width="1" height="1"/><rect x="40" y="4" width="1" height="1"/><rect x="42" y="2" width="1" height="1"/><rect x="44" y="0" width="1" height="1"/><rect x="44" y="4" width="1" height="1"/><rect x="46" y="2" width="1" height="1"/><rect x="48" y="0" width="1" height="1"/><rect x="48" y="4" width="1" height="1"/><rect x="50" y="2" width="1" height="1"/><rect x="52" y="0" width="1" height="1"/><rect x="52" y="4" width="1" height="1"/><rect x="54" y="2" width="1" height="1"/><rect x="56" y="0" width="1" height="1"/><rect x="56" y="4" width="1" height="1"/><rect x="58" y="2" width="1" height="1"/><rect x="60" y="0" width="1" height="1"/><rect x="60" y="4" width="1" height="1"/><rect x="62" y="2" width="1" height="1"/><rect x="64" y="0" width="1" height="1"/><rect x="64" y="4" width="1" height="1"/><rect x="66" y="2" width="1" height="1"/><rect x="68" y="0" width="1" height="1"/><rect x="68" y="4" width="1" height="1"/><rect x="70" y="2" width="1" height="1"/><rect x="72" y="0" width="1" height="1"/><rect x="72" y="4" width="1" height="1"/><rect x="74" y="2" width="1" height="1"/><rect x="76" y="0" width="1" height="1"/><rect x="76" y="4" width="1" height="1"/><rect x="78" y="2" width="1" height="1"/><rect x="80" y="0" width="1" height="1"/><rect x="80" y="4" width="1" height="1"/><rect x="82" y="2" width="1" height="1"/><rect x="84" y="0" width="1" height="1"/><rect x="84" y="4" width="1" height="1"/><rect x="86" y="2" width="1" height="1"/><rect x="88" y="0" width="1" height="1"/><rect x="88" y="4" width="1" height="1"/><rect x="90" y="2" width="1" height="1"/><rect x="92" y="0" width="1" height="1"/><rect x="92" y="4" width="1" height="1"/><rect x="94" y="2" width="1" height="1"/><rect x="96" y="0" width="1" height="1"/><rect x="96" y="4" width="1" height="1"/><rect x="98" y="2" width="1" height="1"/><rect x="100" y="0" width="1" height="1"/><rect x="100" y="4" width="1" height="1"/><rect x="102" y="2" width="1" height="1"/><rect x="104" y="0" width="1" height="1"/><rect x="104" y="4" width="1" height="1"/><rect x="106" y="2" width="1" height="1"/><rect x="108" y="0" width="1" height="1"/><rect x="108" y="4" width="1" height="1"/><rect x="110" y="2" width="1" height="1"/><rect x="112" y="0" width="1" height="1"/><rect x="112" y="4" width="1" height="1"/><rect x="114" y="2" width="1" height="1"/><rect x="116" y="0" width="1" height="1"/><rect x="116" y="4" width="1" height="1"/><rect x="118" y="2" width="1" height="1"/><rect x="120" y="0" width="1" height="1"/><rect x="120" y="4" width="1" height="1"/><rect x="122" y="2" width="1" height="1"/><rect x="124" y="0" width="1" height="1"/><rect x="124" y="4" width="1" height="1"/><rect x="126" y="2" width="1" height="1"/><rect x="128" y="0" width="1" height="1"/><rect x="128" y="4" width="1" height="1"/><rect x="130" y="2" width="1" height="1"/><rect x="132" y="0" width="1" height="1"/><rect x="132" y="4" width="1" height="1"/><rect x="134" y="2" width="1" height="1"/><rect x="136" y="0" width="1" height="1"/><rect x="136" y="4" width="1" height="1"/><rect x="138" y="2" width="1" height="1"/><rect x="140" y="0" width="1" height="1"/><rect x="140" y="4" width="1" height="1"/><rect x="142" y="2" width="1" height="1"/><rect x="144" y="0" width="1" height="1"/><rect x="144" y="4" width="1" height="1"/><rect x="146" y="2" width="1" height="1"/><rect x="148" y="0" width="1" height="1"/><rect x="148" y="4" width="1" height="1"/><rect x="150" y="2" width="1" height="1"/><rect x="152" y="0" width="1" height="1"/><rect x="152" y="4" width="1" height="1"/><rect x="154" y="2" width="1" height="1"/><rect x="156" y="0" width="1" height="1"/><rect x="156" y="4" width="1" height="1"/><rect x="158" y="2" width="1" height="1"/><rect x="160" y="0" width="1" height="1"/><rect x="160" y="4" width="1" height="1"/><rect x="162" y="2" width="1" height="1"/><rect x="164" y="0" width="1" height="1"/><rect x="164" y="4" width="1" height="1"/><rect x="166" y="2" width="1" height="1"/><rect x="168" y="0" width="1" height="1"/><rect x="168" y="4" width="1" height="1"/><rect x="170" y="2" width="1" height="1"/><rect x="172" y="0" width="1" height="1"/><rect x="172" y="4" width="1" height="1"/><rect x="174" y="2" width="1" height="1"/><rect x="176" y="0" width="1" height="1"/><rect x="176" y="4" width="1" height="1"/><rect x="178" y="2" width="1" height="1"/><rect x="180" y="0" width="1" height="1"/><rect x="180" y="4" width="1" height="1"/><rect x="182" y="2" width="1" height="1"/><rect x="184" y="0" width="1" height="1"/><rect x="184" y="4" width="1" height="1"/><rect x="186" y="2" width="1" height="1"/><rect x="188" y="0" width="1" height="1"/><rect x="188" y="4" width="1" height="1"/><rect x="190" y="2" width="1" height="1"/><rect x="192" y="0" width="1" height="1"/><rect x="192" y="4" width="1" height="1"/><rect x="194" y="2" width="1" height="1"/><rect x="196" y="0" width="1" height="1"/><rect x="196" y="4" width="1" height="1"/><rect x="198" y="2" width="1" height="1"/><rect x="200" y="0" width="1" height="1"/><rect x="200" y="4" width="1" height="1"/><rect x="202" y="2" width="1" height="1"/><rect x="204" y="0" width="1" height="1"/><rect x="204" y="4" width="1" height="1"/><rect x="206" y="2" width="1" height="1"/><rect x="208" y="0" width="1" height="1"/><rect x="208" y="4" width="1" height="1"/><rect x="210" y="2" width="1" height="1"/><rect x="212" y="0" width="1" height="1"/><rect x="212" y="4" width="1" height="1"/><rect x="214" y="2" width="1" height="1"/><rect x="216" y="0" width="1" height="1"/><rect x="216" y="4" width="1" height="1"/><rect x="218" y="2" width="1" height="1"/><rect x="220" y="0" width="1" height="1"/><rect x="220" y="4" width="1" height="1"/><rect x="222" y="2" width="1" height="1"/><rect x="224" y="0" width="1" height="1"/><rect x="224" y="4" width="1" height="1"/><rect x="226" y="2" width="1" height="1"/><rect x="228" y="0" width="1" height="1"/><rect x="228" y="4" width="1" height="1"/><rect x="230" y="2" width="1" height="1"/><rect x="232" y="0" width="1" height="1"/><rect x="232" y="4" width="1" height="1"/><rect x="234" y="2" width="1" height="1"/><rect x="236" y="0" width="1" height="1"/><rect x="236" y="4" width="1" height="1"/><rect x="238" y="2" width="1" height="1"/><rect x="240" y="0" width="1" height="1"/><rect x="240" y="4" width="1" height="1"/><rect x="242" y="2" width="1" height="1"/><rect x="244" y="0" width="1" height="1"/><rect x="244" y="4" width="1" height="1"/><rect x="246" y="2" width="1" height="1"/><rect x="248" y="0" width="1" height="1"/><rect x="248" y="4" width="1" height="1"/><rect x="250" y="2" width="1" height="1"/><rect x="252" y="0" width="1" height="1"/><rect x="252" y="4" width="1" height="1"/><rect x="254" y="2" width="1" height="1"/><rect x="256" y="0" width="1" height="1"/><rect x="256" y="4" width="1" height="1"/><rect x="258" y="2" width="1" height="1"/><rect x="260" y="0" width="1" height="1"/><rect x="260" y="4" width="1" height="1"/><rect x="262" y="2" width="1" height="1"/><rect x="264" y="0" width="1" height="1"/><rect x="264" y="4" width="1" height="1"/><rect x="266" y="2" width="1" height="1"/><rect x="268" y="0" width="1" height="1"/><rect x="268" y="4" width="1" height="1"/><rect x="270" y="2" width="1" height="1"/><rect x="272" y="0" width="1" height="1"/><rect x="272" y="4" width="1" height="1"/><rect x="274" y="2" width="1" height="1"/><rect x="276" y="0" width="1" height="1"/><rect x="276" y="4" width="1" height="1"/><rect x="278" y="2" width="1" height="1"/><rect x="280" y="0" width="1" height="1"/><rect x="280" y="4" width="1" height="1"/><rect x="282" y="2" width="1" height="1"/><rect x="284" y="0" width="1" height="1"/><rect x="284" y="4" width="1" height="1"/><rect x="286" y="2" width="1" height="1"/><rect x="288" y="0" width="1" height="1"/><rect x="288" y="4" width="1" height="1"/><rect x="290" y="2" width="1" height="1"/><rect x="292" y="0" width="1" height="1"/><rect x="292" y="4" width="1" height="1"/><rect x="294" y="2" width="1" height="1"/><rect x="296" y="0" width="1" height="1"/><rect x="296" y="4" width="1" height="1"/><rect x="298" y="2" width="1" height="1"/><rect x="300" y="0" width="1" height="1"/><rect x="300" y="4" width="1" height="1"/><rect x="302" y="2" width="1" height="1"/><rect x="304" y="0" width="1" height="1"/><rect x="304" y="4" width="1" height="1"/><rect x="306" y="2" width="1" height="1"/><rect x="308" y="0" width="1" height="1"/><rect x="308" y="4" width="1" height="1"/><rect x="310" y="2" width="1" height="1"/><rect x="312" y="0" width="1" height="1"/><rect x="312" y="4" width="1" height="1"/></g></svg>
<svg style="left:930px;top:491px" width="9" height="5" viewBox="0 0 9 5"><path d="M0 0H8.5L4.25 4.5Z" fill="#1e1e1e"/></svg>
<svg style="left:946px;top:488px" width="9" height="12" viewBox="0 0 9 12" shape-rendering="crispEdges"><path d="M1 0H7V6H8V7H0V6H1Z" fill="#1e1e1e"/><path d="M2 1H5V6H2Z" fill="#eeeef2"/><rect x="4" y="7" width="1" height="4" fill="#1e1e1e"/></svg>
<svg style="left:962px;top:489px" width="10" height="9" viewBox="0 0 10 9"><path d="M0.5 0.3L9.5 8.7M9.5 0.3L0.5 8.7" stroke="#1e1e1e" stroke-width="1.4"/></svg>
<div class="a" style="left:545px;top:505px;width:433px;height:24px;background:#fff"></div>
<div class="t" style="left:552.10px;top:510px;letter-spacing:-0.369px;font-weight:bold">ModularCrm.Products</div>
<div class="t" style="left:678.60px;top:510px;letter-spacing:-0.122px">Solution Properties</div>
<svg style="left:968px;top:516px" width="7" height="4" viewBox="0 0 7 4"><path d="M0 0H6L3 3Z" fill="#555"/></svg>
<div class="a" style="left:545px;top:529px;width:433px;height:6px;background:#eeeef2"></div>
<div class="a" style="left:571px;top:531px;width:23px;height:4px;border:1px solid #3399ff;border-bottom:none;background:#f0f0f3"></div>
<div class="a" style="left:597px;top:533px;width:1px;height:2px;background:#b0b0b8"></div>
<!-- ===== left tab ===== -->
<div class="a" style="left:1px;top:72px;width:6px;height:66px;background:#c9cbd8"></div>
<div class="t" style="top:72.00px;left:11px;letter-spacing:-0.369px;color:#3a3a3a;writing-mode:vertical-rl">Test Explorer</div>
<!-- ===== bottom tabs ===== -->
<div class="t" style="left:32.40px;top:543px;letter-spacing:0.162px">Output</div>
<div class="a" style="left:32px;top:561px;width:38px;height:6px;background:#c9cbd8"></div>
<div class="t" style="left:82.00px;top:543px;letter-spacing:-0.231px">Package Manager Console</div>
<div class="a" style="left:82px;top:561px;width:140px;height:6px;background:#c9cbd8"></div>
<div class="t" style="left:234.00px;top:543px;letter-spacing:-0.371px">Error List</div>
<div class="a" style="left:234px;top:561px;width:46px;height:6px;background:#c9cbd8"></div>
<!-- ===== status bar ===== -->
<div class="a" style="left:0;top:567px;width:986px;height:25px;background:#006abf"></div>
<svg style="left:4px;top:571px" width="18" height="17" viewBox="0 0 18 17"><path d="M1.6 1H16.3V12.5H11.7L9 15.4L6.3 12.5H1.6Z" fill="#1a75c8" stroke="#fff" stroke-width="1.2" stroke-linejoin="miter"/></svg>
<div class="t" style="left:28.50px;top:572px;letter-spacing:-0.226px;color:#fff">Item(s) Saved</div>
<svg style="left:568px;top:572px" width="14" height="14" viewBox="0 0 14 14"><path d="M3.5 13V1.5M0.8 4.2L3.5 1.5L6.2 4.2M10 1V12.5M7.3 9.8L10 12.5L12.7 9.8" fill="none" stroke="#fff" stroke-width="1.1"/></svg>
<div class="t" style="left:589.00px;top:572px;letter-spacing:-0.044px;color:#fff">0 / 0</div>
<svg style="left:618px;top:576px" width="9" height="5" viewBox="0 0 9 5"><path d="M0 4.5H8.5L4.25 0Z" fill="#fff"/></svg>
<svg style="left:650px;top:572px" width="13" height="13" viewBox="0 0 13 13"><path d="M1.3 11.7L1.8 8.8L9.2 1.4C9.8 0.8 10.7 0.8 11.3 1.4L11.6 1.7C12.2 2.3 12.2 3.2 11.6 3.8L4.2 11.2Z" fill="none" stroke="#fff" stroke-width="1.1"/></svg>
<div class="t" style="left:670.50px;top:572px;letter-spacing:-0.924px;color:#fff">99+</div>
<svg style="left:713px;top:571px" width="15" height="16" viewBox="0 0 15 16"><circle cx="3" cy="2.8" r="1.8" fill="none" stroke="#fff" stroke-width="1.1"/><circle cx="3" cy="13.2" r="1.8" fill="none" stroke="#fff" stroke-width="1.1"/><path d="M3 4.6V11.4M3 9.5C3 7.5 5 7 7 6.5" fill="none" stroke="#fff" stroke-width="1.1"/><circle cx="10.5" cy="3" r="1.8" fill="none" stroke="#fff" stroke-width="1.1"/><circle cx="10.5" cy="11.5" r="3.6" fill="#fff"/><path d="M10.5 13.5V9.5M8.9 11L10.5 9.4L12.1 11" fill="none" stroke="#006abf" stroke-width="1"/></svg>
<div class="t" style="left:735.00px;top:572px;letter-spacing:-0.376px;color:#fff">master</div>
<svg style="left:776px;top:576px" width="9" height="5" viewBox="0 0 9 5"><path d="M0 4.5H8.5L4.25 0Z" fill="#fff"/></svg>
<svg style="left:812px;top:571px" width="17" height="17" viewBox="0 0 17 17"><path d="M2.6 5V13.6H7.6V5Z" fill="#1a78c9"/><rect x="1.6" y="1.6" width="12.8" height="3" fill="none" stroke="#fff" stroke-width="1.2"/><path d="M2.6 4.6V13.6H7.5" fill="none" stroke="#fff" stroke-width="1.2"/><path d="M6.3 5V10.5" stroke="#fff" stroke-width="1"/><path d="M8 6.8H13M8 8.8H10.5M9.2 5.5V9.5M11.8 5.5V8" stroke="#4a98dc" stroke-width="0.9"/><circle cx="11.6" cy="12.1" r="4.1" fill="#fff"/><path d="M11.6 14.6V9.9M10 11.5L11.6 9.8L13.2 11.5" fill="none" stroke="#006abf" stroke-width="1.2"/></svg>
<div class="t" style="left:834.60px;top:572px;letter-spacing:-0.140px;color:#fff">abp-samples</div>
<svg style="left:908px;top:576px" width="9" height="5" viewBox="0 0 9 5"><path d="M0 4.5H8.5L4.25 0Z" fill="#fff"/></svg>
<svg style="left:936px;top:570px" width="21" height="20" viewBox="0 0 21 20"><path d="M1.3 13.7C2.2 12.8 2.3 12 2.3 10.5V7.5C2.3 4.3 4.3 2.2 6.9 2.2C9.5 2.2 11.6 4.3 11.6 7.5V10.5C11.6 12 11.8 12.8 12.6 13.7Z" fill="#2278c8" stroke="#fff" stroke-width="1.1" stroke-linejoin="round"/><path d="M5.3 15C5.8 15.8 7.2 15.8 7.7 15" fill="none" stroke="#fff" stroke-width="1.1"/><circle cx="14.2" cy="13.9" r="5.9" fill="#e01414"/><path d="M12.6 11.3L14.6 9.9V17.6" fill="none" stroke="#fff" stroke-width="1.3"/></svg>
<svg style="left:973px;top:579px" width="7" height="7" viewBox="0 0 7 7" shape-rendering="crispEdges"><g fill="#0a4c8c"><rect x="5" y="-1" width="1" height="1"/><rect x="3" y="1" width="1" height="1"/><rect x="5" y="1" width="1" height="1"/><rect x="1" y="3" width="1" height="1"/><rect x="3" y="3" width="1" height="1"/><rect x="5" y="3" width="1" height="1"/><rect x="-1" y="5" width="1" height="1"/><rect x="1" y="5" width="1" height="1"/><rect x="3" y="5" width="1" height="1"/><rect x="5" y="5" width="1" height="1"/></g><g fill="#d0e0f2"><rect x="6" y="0" width="1" height="1"/><rect x="4" y="2" width="1" height="1"/><rect x="6" y="2" width="1" height="1"/><rect x="2" y="4" width="1" height="1"/><rect x="4" y="4" width="1" height="1"/><rect x="6" y="4" width="1" height="1"/><rect x="0" y="6" width="1" height="1"/><rect x="2" y="6" width="1" height="1"/><rect x="4" y="6" width="1" height="1"/><rect x="6" y="6" width="1" height="1"/></g></svg>
<div id="frame"></div>
</div>
</body></html>
